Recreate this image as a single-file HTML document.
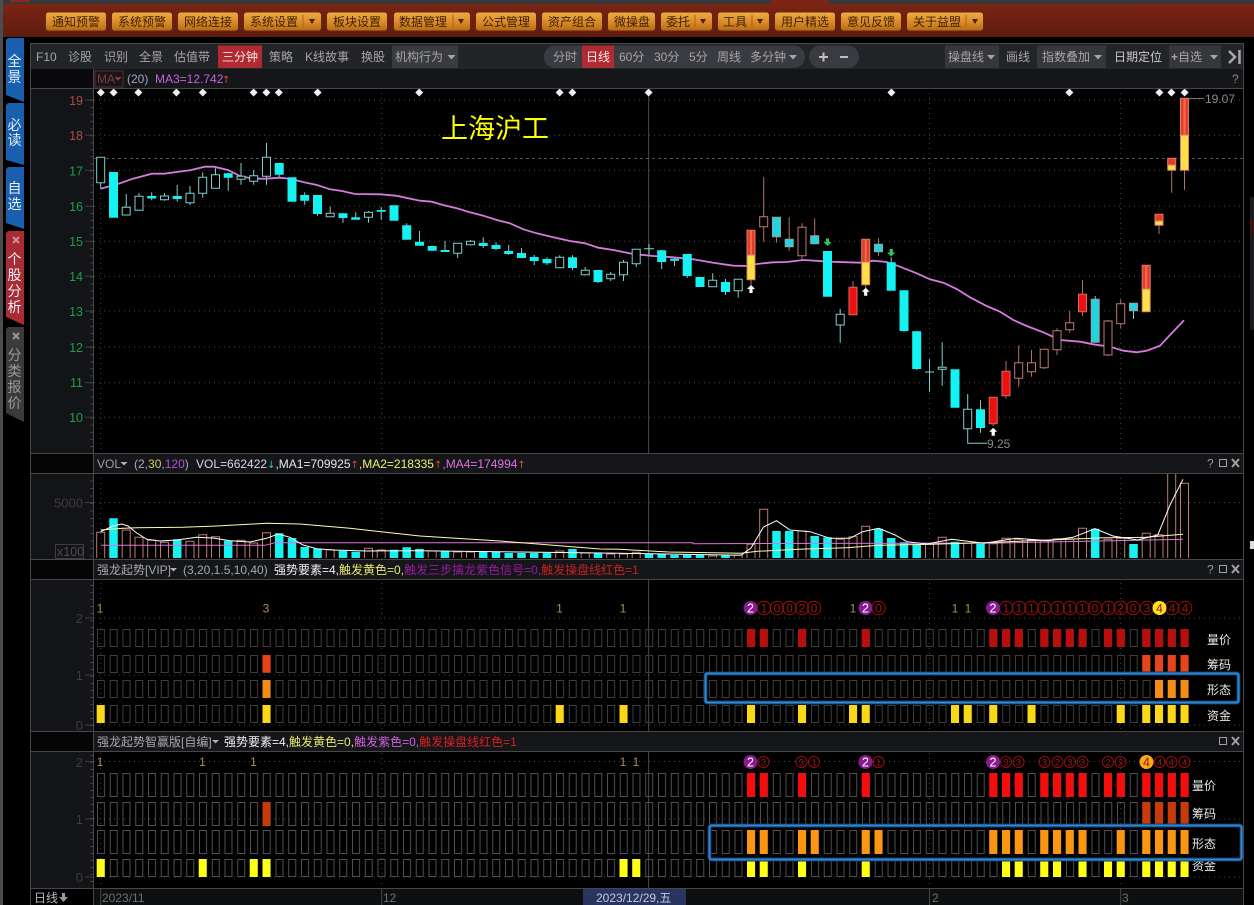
<!DOCTYPE html>
<html><head><meta charset="utf-8"><style>
html,body{margin:0;padding:0;background:#000;width:1254px;height:905px;overflow:hidden}
svg{position:absolute;left:0;top:0;font-family:"Liberation Sans","Noto Sans CJK SC",sans-serif;font-size:12px}
.t{fill:#a6a6a6}
.b{fill:#3f2005;text-anchor:middle}
.m{text-anchor:middle}
.ax{fill:#1f9e48;text-anchor:end;font-size:12.5px}
.dim{fill:#3d3d3d;text-anchor:end;font-size:13px}
.lab{fill:#e8e8e8}
.ar{font-family:"DejaVu Sans",sans-serif;font-size:10px}
</style></head><body>
<svg width="1254" height="905" viewBox="0 0 1254 905" xmlns="http://www.w3.org/2000/svg">
<defs>
<linearGradient id="top" x1="0" y1="0" x2="0" y2="1"><stop offset="0" stop-color="#7c2413"/><stop offset="1" stop-color="#5e1c10"/></linearGradient>
<linearGradient id="btn" x1="0" y1="0" x2="0" y2="1"><stop offset="0" stop-color="#eead48"/><stop offset=".55" stop-color="#d98a26"/><stop offset="1" stop-color="#b56a14"/></linearGradient>
<pattern id="a" patternUnits="userSpaceOnUse" x="97" y="629" width="12.75" height="18"><rect x=".5" y=".5" width="7" height="17" fill="none" stroke="#3e3e3e"/></pattern>
<pattern id="b" patternUnits="userSpaceOnUse" x="97" y="655" width="12.75" height="18"><rect x=".5" y=".5" width="7" height="17" fill="none" stroke="#3e3e3e"/></pattern>
<pattern id="c" patternUnits="userSpaceOnUse" x="97" y="680" width="12.75" height="18"><rect x=".5" y=".5" width="7" height="17" fill="none" stroke="#3e3e3e"/></pattern>
<pattern id="d" patternUnits="userSpaceOnUse" x="97" y="705" width="12.75" height="18"><rect x=".5" y=".5" width="7" height="17" fill="none" stroke="#3e3e3e"/></pattern>
<pattern id="e" patternUnits="userSpaceOnUse" x="97" y="773" width="12.75" height="24"><rect x=".5" y=".5" width="7" height="23" fill="none" stroke="#505050"/></pattern>
<pattern id="f" patternUnits="userSpaceOnUse" x="97" y="802" width="12.75" height="24"><rect x=".5" y=".5" width="7" height="23" fill="none" stroke="#505050"/></pattern>
<pattern id="g" patternUnits="userSpaceOnUse" x="97" y="830" width="12.75" height="24"><rect x=".5" y=".5" width="7" height="23" fill="none" stroke="#505050"/></pattern>
<pattern id="h" patternUnits="userSpaceOnUse" x="97" y="859" width="12.75" height="18"><rect x=".5" y=".5" width="7" height="17" fill="none" stroke="#505050"/></pattern>
</defs>
<rect width="1254" height="905" fill="#000"/>
<!-- top strip -->
<rect x="3" width="1251" height="5" fill="#38383a"/>
<rect x="3" y="4" width="1251" height="33" fill="url(#top)"/>
<rect x="771" width="58" height="5" fill="#7c2413"/>
<rect x="10" width="20" height="2" fill="#8a2a1a"/>
<rect width="3" height="905" fill="#4c4c4c"/>
<!-- toolbar buttons -->
<g fill="url(#btn)" stroke="#66280c">
<rect x="45.5" y="12" width="61" height="19" rx="3"/><rect x="111.5" y="12" width="61" height="19" rx="3"/><rect x="177.5" y="12" width="61" height="19" rx="3"/><rect x="243.5" y="12" width="78" height="19" rx="3"/><rect x="326.5" y="12" width="61" height="19" rx="3"/><rect x="393.5" y="12" width="77" height="19" rx="3"/><rect x="475.5" y="12" width="61" height="19" rx="3"/><rect x="541.5" y="12" width="61" height="19" rx="3"/><rect x="607.5" y="12" width="48" height="19" rx="3"/><rect x="660.5" y="12" width="52" height="19" rx="3"/><rect x="717.5" y="12" width="52" height="19" rx="3"/><rect x="774.5" y="12" width="61" height="19" rx="3"/><rect x="840.5" y="12" width="61" height="19" rx="3"/><rect x="906.5" y="12" width="77" height="19" rx="3"/>
</g>
<g class="b">
<text x="76" y="26" class="b">通知预警</text><text x="142" y="26" class="b">系统预警</text><text x="208" y="26" class="b">网络连接</text><text x="274" y="26" class="b">系统设置</text><text x="357" y="26" class="b">板块设置</text><text x="423" y="26" class="b">数据管理</text><text x="506" y="26" class="b">公式管理</text><text x="572" y="26" class="b">资产组合</text><text x="632" y="26" class="b">微操盘</text><text x="678" y="26" class="b">委托</text><text x="735" y="26" class="b">工具</text><text x="805" y="26" class="b">用户精选</text><text x="871" y="26" class="b">意见反馈</text><text x="937" y="26" class="b">关于益盟</text>
</g>
<path d="M303 15v12M453 15v12M695 15v12M752 15v12M966 15v12" stroke="#a8661e"/>
<path d="M309 19h6l-3 5zM458 19h6l-3 5zM700 19h6l-3 5zM757 19h6l-3 5zM972 19h6l-3 5z" fill="#4a2400"/>
<!-- left tabs -->
<path d="M8 38h16v64L6 95V40z" fill="#1a5fae"/>
<path d="M8 103h16v62L6 160V105z" fill="#1a5fae"/>
<path d="M8 167h16v62L6 223V169z" fill="#1a5fae"/>
<path d="M8 231h16v94L6 317V233z" fill="#a82c34"/>
<path d="M8 327h16v95L6 413V329z" fill="#3a3a3c"/>
<g font-size="14" text-anchor="middle" fill="#e8f0f8">
<text x="14.5" y="66">全</text><text x="14.5" y="82">景</text><text x="14.5" y="130">必</text><text x="14.5" y="145">读</text><text x="14.5" y="193">自</text><text x="14.5" y="209">选</text>
<text x="14.5" y="264">个</text><text x="14.5" y="280">股</text><text x="14.5" y="296">分</text><text x="14.5" y="312">析</text>
<g fill="#9a9a9a"><text x="14.5" y="360">分</text><text x="14.5" y="376">类</text><text x="14.5" y="392">报</text><text x="14.5" y="408">价</text></g>
</g>
<path d="M13 237l6 6M19 237l-6 6" stroke="#c89094" stroke-width="2"/>
<path d="M13 333l6 6M19 333l-6 6" stroke="#999" stroke-width="2"/>
<!-- main frame -->
<rect x="30" y="44" width="1214" height="25" fill="#232428"/>
<rect x="30" y="69" width="1214" height="19" fill="#15161a"/>
<rect x="30" y="88" width="64" height="801" fill="#131417"/>
<rect x="30" y="69" width="64" height="19" fill="#0a0a0c"/>
<!-- grid -->
<g stroke="#454545" stroke-dasharray="1 4" fill="none">
<path d="M94 100H1243M94 135.3H1243M94 170.3H1243M94 206.3H1243M94 241.3H1243M94 276.3H1243M94 311H1243M94 347H1243M94 382.6H1243M94 417.3H1243"/>
<path d="M94 502.5H1243M94 618H1243M94 675H1243M94 725H1243M94 761.5H1243M94 819H1243M94 877H1243"/>
<path d="M100.7 88V888M381.7 88V888M929.5 88V888M1120.7 88V888"/>
</g>
<path d="M648.6 88V888" stroke="#484848"/>
<path d="M94 158.5H1243" stroke="#565656" stroke-dasharray="3 3"/>
<!-- axis ticks -->
<g stroke="#3e3e3e" fill="none">
<path d="M92 100V450" stroke-width="4" stroke-dasharray="1 6.06"/>
<path d="M92 473V558" stroke-width="4" stroke-dasharray="1 6.5"/>
<path d="M92 585V728" stroke-width="4" stroke-dasharray="1 6"/>
<path d="M92 755V885" stroke-width="4" stroke-dasharray="1 6"/>
<path d="M85 100h9M85 135.3h9M85 170.3h9M85 206.3h9M85 241.3h9M85 276.3h9M85 311h9M85 347h9M85 382.6h9M85 417.3h9M85 502.5h9M85 618h9M85 675h9M85 725h9M85 761.5h9M85 819h9M85 877h9"/>
</g>
<text x="83" y="105" class="ax" style="fill:#b04848">19</text>
<text x="83" y="140" class="ax" style="fill:#b04848">18</text>
<text x="83" y="175.5" class="ax">17</text><text x="83" y="211" class="ax">16</text><text x="83" y="246" class="ax">15</text><text x="83" y="281" class="ax">14</text><text x="83" y="316" class="ax">13</text><text x="83" y="352" class="ax">12</text><text x="83" y="387" class="ax">11</text><text x="83" y="422" class="ax">10</text>
<text x="83" y="507.5" class="dim">5000</text>
<rect x="55.5" y="544.5" width="28" height="14" fill="none" stroke="#3d3d3d"/><text x="57" y="556" fill="#4c4c4c" font-size="12.5">x100</text>
<text x="83" y="623" class="dim">2</text><text x="83" y="680" class="dim">1</text><text x="83" y="730" class="dim">0</text>
<text x="83" y="767" class="dim">2</text><text x="83" y="824" class="dim">1</text><text x="83" y="882" class="dim">0</text>
<!-- title -->
<text x="441" y="138" font-size="27" fill="#ffff00" style="font-family:'Noto Sans CJK SC',sans-serif;font-weight:400">上海沪工</text>
<!-- diamonds -->
<path fill="#eee" d="M100.8 88.5l4 4-4 4-4-4zM113.6 88.5l4 4-4 4-4-4zM138.4 88.5l4 4-4 4-4-4zM176.4 88.5l4 4-4 4-4-4zM202.8 88.5l4 4-4 4-4-4zM253.6 88.5l4 4-4 4-4-4zM266.4 88.5l4 4-4 4-4-4zM278.8 88.5l4 4-4 4-4-4zM317.6 88.5l4 4-4 4-4-4zM419.2 88.5l4 4-4 4-4-4zM559.6 88.5l4 4-4 4-4-4zM572.4 88.5l4 4-4 4-4-4zM648.6 88.5l4 4-4 4-4-4zM891.4 88.5l4 4-4 4-4-4zM1069.4 88.5l4 4-4 4-4-4zM1159.4 88.5l4 4-4 4-4-4zM1171.4 88.5l4 4-4 4-4-4zM1184.6 88.5l4 4-4 4-4-4z"/>
<!-- wicks teal -->
<path fill="none" stroke="#7fd0cc" d="M100.7 157V189M126.2 194V215M139 193V210M151.7 192.3V200.3M164.5 193V200.7M177.2 185V201.7M190 186V205M202.7 172.3V197.7M215.5 168.3V188M228.2 172.7V190.7M241 163V184.7M253.7 170V184.7M266.5 143V184.7M279.2 163V177.3M304.7 192.3V204.7M317.5 195V215.7M330.2 206.7V216M343 213V222.7M355.7 212.3V219M368.5 211V222.7M381.2 207V220M406.7 223.3V239M419.5 231V245M445 241V251M457.7 243V258M470.5 240V245.5M483.2 237.3V248M496 242.3V250M508.7 245V255M521.5 248V256M534.2 255V265M547 257.3V265M559.7 255.3V267M572.5 255.3V270M585.2 267V272M598 270V283M610.7 272V281M623.5 260V281M636.2 249V267M649 244V255M644 248.7H654M661.7 250V269M674.5 256.7V266M687.2 254V278M712.7 273.3V283M725.5 279V295M738.2 279V297.7M840.2 309V342.7M891.2 257.3V290M904 290V332M916.7 331V370M929.5 359.3V391.7M925 372H934M942.2 342.3V385.7M967.7 394V443.3H987M980.5 400.3V432.7M1095.2 296V299M1133.5 310V319"/>
<!-- wicks pink -->
<path fill="none" stroke="#b56f6a" d="M751 279V285M763.7 177.3V241.7M776.5 236V242.7M789.2 217.3V250.7M802 223.3V260M814.7 218.3V236M853 281.3V288M865.7 284V289M878.5 238V256M993.2 423V426M1006 361V398.7M1018.7 345.3V386.7M1031.5 350V376.7M1044.2 349V369M1057 328.3V355M1069.7 311V332.7M1082.5 280V316M1108 320V356M1120.7 299.3V328.3M1159 225V234M1171.7 170V192.7M1184.5 170V190"/>
<!-- MA -->
<path fill="none" stroke="#d67ade" stroke-width="1.8" d="M100.7 188.7L120 183.3L133 178.7L152 173.7L164 173.7L190 170.3L205 166.7L214 166.7L228 170L240 176L253 178.7L266 178.7L280 177.7L291 179L304 182.3L317 185L330 189.3L342 191L355 194L380 194.3L396 195.7L420 200.7L431.7 201.7L443 205L456.7 208.3L470 212.3L483.3 215.7L496.7 220L510 223.3L523.3 229.3L536.7 233.3L553.3 237.3L570 241L585 243.3L598.3 247.7L613.3 250L633.3 254L653.3 256L673.3 257.3L693.3 259.3L713.3 262.7L733.3 265.7L750 266L756.7 264L773 262.3L786.7 262L803.3 260L830 261.7L860 262.7L873.3 260.7L886.7 262L900 266.7L916.7 273.3L930 279.3L943.3 282.7L956.7 289L970 297.3L986.7 306L1000 311.7L1013.3 320L1026.7 326L1043.3 332.3L1060 340L1080 341.7L1093.3 344.3L1110 346.7L1123.3 350.7L1136.7 352.3L1146.7 350.7L1160 345.7L1170 335L1184 320.3"/>
<!-- hollow teal bodies -->
<path fill="#000" stroke="#7fd0cc" d="M96.7 157.3h8v25.4h-8zM122.2 207.3h8v7.7h-8zM135 196.3h8v14h-8zM160.5 196h8v3.7h-8zM198.7 177.3h8v16h-8zM211.5 174.7h8v13.6h-8zM186 193.3h8v9.4h-8zM237 176.3h8v3h-8zM249.7 175.7h8v5.6h-8zM262.5 157.3h8v19h-8zM326.2 213.3h8v3.4h-8zM364.5 212.3h8v5h-8zM453.7 243.3h8v10h-8zM466.5 241.3h8v3.4h-8zM555.7 257.3h8v10.4h-8zM581.2 270.3h8v4.4h-8zM606.7 274.3h8v4.4h-8zM619.5 262.3h8v12.4h-8zM632.2 249.3h8v14.4h-8zM708.7 280.3h8v6.4h-8zM734.2 279.3h8v11.4h-8zM836.2 314.3h8v10.7h-8zM938.2 367.3h8v2h-8zM963.7 409.3h8v19.4h-8z"/>
<!-- solid cyan bodies -->
<path fill="#14f2f2" d="M109 172h9v45.7h-9zM147.2 196h9v2.5h-9zM172.7 196h9v3h-9zM223.7 173.3h9v4.4h-9zM274.7 163h9v11.7h-9zM287.5 177.3h9v24.4h-9zM300.2 195h9v5.7h-9zM313 195h9v19h-9zM338.5 213.3h9v4.7h-9zM351.2 217.3h9v2.4h-9zM376.7 210h9v1.7h-9zM389.5 205.3h9v15.4h-9zM402.2 225.3h9v14.4h-9zM415 241.7h9v4h-9zM427.7 246h9v4.7h-9zM440.5 250h9v2h-9zM478.7 243h9v3h-9zM491.5 245h9v4h-9zM504.2 251h9v3h-9zM517 253h9v5h-9zM529.7 257h9v4h-9zM542.5 259h9v4.3h-9zM568 257.3h9v10.7h-9zM593.5 270h9v12h-9zM657.2 250.3h9v11.7h-9zM670 258.7h9v2h-9zM682.7 254h9v22h-9zM695.5 277h9v10h-9zM721 282h9v10h-9zM823 251h9v45.7h-9zM886.7 262.3h9v28.4h-9zM899.5 290.3h9v40.7h-9zM912.2 331.3h9v37.7h-9zM950.5 369.3h9v38.4h-9zM976 409.3h9v18.7h-9z"/>
<!-- cyan with grey border -->
<path fill="#1fd6e0" stroke="#9aa0a0" d="M772.5 217.3h8v19.4h-8zM785.2 239.3h8v7.4h-8zM810.7 235.7h8v8h-8zM874.5 244.3h8v7.4h-8zM1091.2 299.3h8v43h-8zM1129.5 303.3h8v7.4h-8z"/>
<!-- hollow pink bodies -->
<path fill="#000" stroke="#c07a74" d="M759.7 216.7h8v10h-8zM798 227.3h8v28.4h-8zM1014.7 362.7h8v15.6h-8zM1027.5 362.7h8v9h-8zM1040.2 349.3h8v18.4h-8zM1053 330.7h8v19h-8zM1065.7 322.7h8v7h-8zM1104 321h8v34h-8zM1116.7 303.7h8v20h-8z"/>
<!-- red bodies -->
<path fill="#ee1010" stroke="#d86a60" d="M849 287.3h8v27.4h-8zM989.2 397.3h8v26.4h-8zM1002 371.3h8v24.4h-8zM1078.5 294.3h8v17.4h-8z"/>
<!-- bicolor -->
<g stroke="#d8805a">
<path fill="#e63a2c" d="M747 230.3h8V255h-8zM861.7 239.3h8V262h-8zM1142.2 265.3h8V289h-8zM1155 214.3h8V221h-8zM1167.7 158.3h8V165h-8zM1180.5 98.3h8V135h-8z"/>
<path fill="#fde04a" d="M747 255h8v24.7h-8zM861.7 262h8v22.7h-8zM1142.2 289h8v22.7h-8zM1155 221h8v4.3h-8zM1167.7 165h8v5.3h-8zM1180.5 135h8v35.3h-8z"/>
</g>
<path d="M751 230.3V255M865.7 239.3V262M1146.2 265.3V289M1184.5 98.3V135" stroke="#f26a50" stroke-width="2"/>
<!-- arrows -->
<path fill="#fff" d="M751 285l4 4h-2.4v4h-3.2v-4H747zM865.7 287.7l4 4h-2.4v4h-3.2v-4h-2.4zM993.2 427.7l4 4h-2.4v4h-3.2v-4h-2.4z"/>
<path fill="#2ec850" d="M827.5 246l-4-4h2.4v-3.5h3.2v3.5h2.4zM891.2 256.5l-4-4h2.4v-3.5h3.2v3.5h2.4z"/>
<!-- hi/lo labels -->
<path d="M1188 98.5H1204" stroke="#777"/>
<text x="1205" y="103" fill="#8a8a8a">19.07</text>
<text x="987" y="448" fill="#8a8a8a">9.25</text>
<!-- VOL bars -->
<path stroke="#14f2f2" stroke-width="8.5" fill="none" d="M113.5 518.3V558M177.2 539.3V558M228.2 540.7V558M279.2 533.3V558M292 538V558M304.7 547V558M317.5 548.7V558M343 550.7V558M355.7 551.7V558M394 549.7V558M406.7 547.3V558M419.5 549V558M445 551V558M483.2 552V558M496 552V558M508.7 553V558M521.5 553V558M534.2 553V558M547 553V558M572.5 549V558M598 553V558M649 554V558M661.7 554V558M674.5 555V558M687.2 555V558M700 555V558M725.5 555.3V558M776.5 531V558M789.2 531V558M814.7 536V558M827.5 537.3V558M878.5 528.7V558M891.2 538V558M904 542.3V558M916.7 544.3V558M955 541.7V558M980.5 543.7V558M1095.2 528.7V558M1133.5 544V558"/>
<path stroke="#c07a74" fill="none" d="M96.7 558V532.3h8V558M122.2 558V530h8V558M135 558V537.3h8V558M147.7 558V540.3h8V558M160.5 558V542.3h8V558M186 558V541.3h8V558M198.7 558V534.7h8V558M211.5 558V536.7h8V558M237 558V540.3h8V558M249.7 558V543h8V558M262.5 558V532.7h8V558M326.2 558V549.7h8V558M364.5 558V548.3h8V558M377.2 558V550h8V558M428.2 558V551h8V558M453.7 558V552h8V558M466.5 558V552h8V558M555.7 558V551h8V558M581.2 558V553h8V558M606.7 558V554h8V558M619.5 558V554h8V558M632.2 558V552.3h8V558M708.7 558V556h8V558M734.2 558V555h8V558M747 558V544.3h8V558M759.7 558V509.3h8V558M798 558V531h8V558M836.2 558V539.3h8V558M849 558V536.7h8V558M861.7 558V526.3h8V558M925.5 558V544.3h8V558M938.2 558V537.3h8V558M963.7 558V543h8V558M989.2 558V543.7h8V558M1002 558V538.3h8V558M1014.7 558V539.3h8V558M1027.5 558V540h8V558M1040.2 558V540.7h8V558M1053 558V538.7h8V558M1065.7 558V539.3h8V558M1078.5 558V528.3h8V558M1104 558V539.3h8V558M1116.7 558V538.3h8V558M1142.2 558V533.3h8V558M1155 558V534.7h8V558M1167.7 558V473.3h8V558M1180.5 558V483.3h8V558"/>
<path fill="none" stroke="#d878d8" d="M100.7 545.3H265L275 542.7H693V543.7L1000 543L1183 539.3"/>
<path fill="none" stroke="#ffffb0" d="M100.7 530L123 528.3L136.7 527.7L183 527.3L216.7 526L266.7 523.3L300 524L350 528.3L420 536L500 541L600 549L620 549.3L668.5 552L741 553.3L757.5 551.3L798 549.3L846.4 547.7L878.8 545.3L931.4 544.3L984 542.7L1048.6 540L1105 537.7L1145.7 537.3L1183 534.3"/>
<path fill="none" stroke="#fff" d="M100.7 531.7L113 526L121.7 524L128 526L136.7 533L146.7 539.3L160 541L176.7 540L196.7 537.3L213 538L230 540.7L250 542L266.7 538.3L278 534L290 537.3L303 545L316.7 548.7L333 550L366.7 551L420 550.7L520 552L620 553.3L741 555.3L751 548L763.5 527L776.5 520.7L790 530L810 531.7L830 538.3L850 538.3L862.6 531.7L878.8 528.3L895 535L907 541.7L927 544L951.6 539.3L984 543.3L1016 538.3L1048.6 540.7L1073 537.3L1095 528.7L1113 536L1137.6 540L1157.8 535L1170 505L1183 479.3"/>
<!-- panel 3 boxes -->
<rect x="97" y="629" width="1096.5" height="18" fill="url(#a)"/>
<rect x="97" y="655" width="1096.5" height="18" fill="url(#b)"/>
<rect x="97" y="680" width="1096.5" height="18" fill="url(#c)"/>
<rect x="97" y="705" width="1096.5" height="18" fill="url(#d)"/>
<path stroke="#b80e0e" stroke-width="8" d="M751 629v18M763.7 629v18M802 629v18M865.7 629v18M993.2 629v18M1006 629v18M1018.7 629v18M1044.2 629v18M1057 629v18M1069.7 629v18M1082.5 629v18M1108 629v18M1120.7 629v18M1146.2 629v18M1159 629v18M1171.7 629v18M1184.5 629v18"/>
<path stroke="#e8431a" stroke-width="8" d="M266.5 655v17.5M1146.2 655v17.5M1159 655v17.5M1171.7 655v17.5M1184.5 655v17.5"/>
<path stroke="#f58c16" stroke-width="8" d="M266.5 680v18M1159 680v18M1171.7 680v18M1184.5 680v18"/>
<path stroke="#fbd816" stroke-width="8" d="M100.7 705v18M266.5 705v18M559.7 705v18M623.5 705v18M751 705v18M802 705v18M853 705v18M865.7 705v18M955 705v18M967.7 705v18M993.2 705v18M1031.5 705v18M1120.7 705v18M1146.2 705v18M1159 705v18M1171.7 705v18M1184.5 705v18"/>
<!-- panel 3 numbers -->
<text x="100 266 559.5 623 853 955 968" y="612.5" fill="#b08c50" font-size="12" style="text-anchor:middle">1311111</text>
<g fill="none" stroke="#981010">
<circle cx="764" cy="608" r="6.8"/><circle cx="777" cy="608" r="6.8"/><circle cx="789.5" cy="608" r="6.8"/><circle cx="802" cy="608" r="6.8"/><circle cx="814" cy="608" r="6.8"/><circle cx="878.5" cy="608" r="6.8"/><circle cx="1006" cy="608" r="6.8"/><circle cx="1019" cy="608" r="6.8"/><circle cx="1031.5" cy="608" r="6.8"/><circle cx="1044.5" cy="608" r="6.8"/><circle cx="1057.5" cy="608" r="6.8"/><circle cx="1070" cy="608" r="6.8"/><circle cx="1082.5" cy="608" r="6.8"/><circle cx="1095" cy="608" r="6.8"/><circle cx="1108.5" cy="608" r="6.8"/><circle cx="1120.5" cy="608" r="6.8"/><circle cx="1133" cy="608" r="6.8"/><circle cx="1147" cy="608" r="6.8"/><circle cx="1172" cy="608" r="6.8"/><circle cx="1185" cy="608" r="6.8"/>
</g>
<circle cx="750.5" cy="608" r="7" fill="#8a1a90"/><circle cx="865.5" cy="608" r="7" fill="#8a1a90"/><circle cx="993" cy="608" r="7" fill="#8a1a90"/><circle cx="1159.5" cy="608" r="7" fill="#ffe020"/>
<text x="750.5 865.5 993" y="612.5" fill="#fff" font-size="12.5" text-anchor="middle">222</text>
<text x="764 777 789.5 802 814 878.5 1006 1019 1031.5 1044.5 1057.5 1070 1082.5 1095 1108.5 1120.5 1133 1147 1159.5 1172 1185" y="612.5" fill="#a01414" font-size="12" text-anchor="middle">100200111111101203444</text>
<!-- panel 3 labels -->
<text x="1207" y="644" class="lab">量价</text><text x="1207" y="669" class="lab">筹码</text><text x="1207" y="694" class="lab">形态</text><text x="1207" y="720" class="lab">资金</text>
<rect x="705.5" y="673.5" width="533" height="29" rx="2" fill="none" stroke="#123a60" stroke-width="4"/>
<rect x="705.5" y="673.5" width="533" height="29" rx="2" fill="none" stroke="#2f88da" stroke-width="2"/>
<!-- panel 4 boxes -->
<rect x="97" y="773" width="1096.5" height="24" fill="url(#e)"/>
<rect x="97" y="802" width="1096.5" height="24" fill="url(#f)"/>
<rect x="97" y="830" width="1096.5" height="24" fill="url(#g)"/>
<rect x="97" y="859" width="1096.5" height="18" fill="url(#h)"/>
<path stroke="#f50c0c" stroke-width="8" d="M751 773v24M763.7 773v24M802 773v24M865.7 773v24M993.2 773v24M1006 773v24M1018.7 773v24M1044.2 773v24M1057 773v24M1069.7 773v24M1082.5 773v24M1108 773v24M1120.7 773v24M1146.2 773v24M1159 773v24M1171.7 773v24M1184.5 773v24"/>
<path stroke="#c83a08" stroke-width="8" d="M266.5 802v24M1146.2 802v24M1159 802v24M1171.7 802v24M1184.5 802v24"/>
<path stroke="#fa9612" stroke-width="8" d="M751 830v24M763.7 830v24M802 830v24M814.7 830v24M865.7 830v24M878.5 830v24M993.2 830v24M1006 830v24M1018.7 830v24M1044.2 830v24M1057 830v24M1069.7 830v24M1082.5 830v24M1120.7 830v24M1146.2 830v24M1159 830v24M1171.7 830v24M1184.5 830v24"/>
<path stroke="#ffff14" stroke-width="8" d="M100.7 859v18M202.7 859v18M253.7 859v18M266.5 859v18M623.5 859v18M636.2 859v18M751 859v18M763.7 859v18M802 859v18M865.7 859v18M1006 859v18M1018.7 859v18M1044.2 859v18M1057 859v18M1082.5 859v18M1108 859v18M1120.7 859v18M1146.2 859v18M1159 859v18M1171.7 859v18M1184.5 859v18"/>
<!-- panel 4 numbers -->
<text x="100 202.5 253.5 623 636" y="766" fill="#b08c50" font-size="12" text-anchor="middle">11111</text>
<g fill="none" stroke="#981010">
<circle cx="763.5" cy="762" r="5.5"/><circle cx="801.5" cy="762" r="5.5"/><circle cx="814" cy="762" r="5.5"/><circle cx="878.5" cy="762" r="5.5"/><circle cx="1006" cy="762" r="5.5"/><circle cx="1018.5" cy="762" r="5.5"/><circle cx="1044.5" cy="762" r="5.5"/><circle cx="1057.5" cy="762" r="5.5"/><circle cx="1070" cy="762" r="5.5"/><circle cx="1082.5" cy="762" r="5.5"/><circle cx="1108" cy="762" r="5.5"/><circle cx="1120.5" cy="762" r="5.5"/><circle cx="1159.5" cy="762" r="5.5"/><circle cx="1171.5" cy="762" r="5.5"/><circle cx="1184.5" cy="762" r="5.5"/>
</g>
<circle cx="750.5" cy="762" r="7" fill="#8a1a90"/><circle cx="865.5" cy="762" r="7" fill="#8a1a90"/><circle cx="993" cy="762" r="7" fill="#8a1a90"/><circle cx="1146.5" cy="762" r="7" fill="#f8a818"/>
<text x="750.5 865.5 993" y="766.5" fill="#fff" font-size="12.5" text-anchor="middle">222</text>
<text x="1146.5" y="766.5" fill="#a01414" font-size="12.5" text-anchor="middle">4</text>
<text x="763.5 801.5 814 878.5 1006 1018.5 1044.5 1057.5 1070 1082.5 1108 1120.5 1159.5 1171.5 1184.5" y="765.5" fill="#a01414" font-size="9.5" text-anchor="middle">331133323323444</text>
<!-- panel 4 labels -->
<text x="1192" y="790" class="lab">量价</text><text x="1192" y="818" class="lab">筹码</text><text x="1192" y="848" class="lab">形态</text><text x="1192" y="870" class="lab">资金</text>
<rect x="709.5" y="825.5" width="532" height="34" rx="2" fill="none" stroke="#123a60" stroke-width="4"/>
<rect x="709.5" y="825.5" width="532" height="34" rx="2" fill="none" stroke="#2f88da" stroke-width="2"/>
<!-- panel headers -->
<rect x="94" y="454" width="1150" height="19" fill="#15161a"/>
<rect x="94" y="560" width="1150" height="19" fill="#15161a"/>
<rect x="94" y="732" width="1150" height="19" fill="#15161a"/>
<rect x="30" y="454" width="64" height="19" fill="#050506"/>
<rect x="30" y="560" width="64" height="19" fill="#050506"/>
<rect x="30" y="732" width="64" height="19" fill="#050506"/>
<rect x="94" y="889" width="1150" height="16" fill="#0e0f11"/>
<g stroke="#474747" fill="none">
<path d="M30 43.5H1244M30 88.5H1244M30 453.5H1244M30 473.5H1244M30 559.5H1244M30 579.5H1244M30 731.5H1244M30 751.5H1244M30 888.5H1244M30.5 44V905M93.5 69V905M1243.5 44V905"/>
</g>
<path d="M1250 197h4v133h-4z" fill="#1c1c1e"/><path d="M1250 220h4v14h-4z" fill="#3a1214"/><path d="M1250 541h4v8h-4z" fill="#ddd"/>
<!-- toolbar -->
<rect x="544" y="45.5" width="261" height="22.5" rx="11" fill="#3a3b40"/>
<rect x="809" y="45.5" width="50" height="22.5" rx="11" fill="#3a3b40"/>
<rect x="218" y="45.5" width="44" height="22.5" fill="#b02a32"/>
<rect x="582" y="45.5" width="32" height="22.5" fill="#b02a32"/>
<rect x="392" y="45.5" width="66" height="22.5" fill="#3a3b3f"/>
<rect x="945" y="45.5" width="54" height="22.5" fill="#36373b"/>
<rect x="1037" y="45.5" width="69" height="22.5" fill="#36373b"/>
<rect x="1169" y="45.5" width="52" height="22.5" fill="#36373b"/>
<g class="t">
<text x="36" y="61">F10</text><text x="68" y="61">诊股</text><text x="104" y="61">识别</text><text x="139" y="61">全景</text><text x="174" y="61">估值带</text>
<text x="222" y="61" style="fill:#f4e8e8">三分钟</text><text x="269" y="61">策略</text><text x="305" y="61">K线故事</text><text x="361" y="61">换股</text><text x="395" y="61">机构行为</text>
<text x="553" y="61">分时</text><text x="586" y="61" style="fill:#f4e8e8">日线</text><text x="619" y="61">60分</text><text x="654" y="61">30分</text><text x="689" y="61">5分</text><text x="717" y="61">周线</text><text x="750" y="61">多分钟</text>
<text x="948" y="61">操盘线</text><text x="1006" y="61">画线</text><text x="1042" y="61">指数叠加</text><text x="1114" y="61" style="fill:#c8c8c8">日期定位</text><text x="1171" y="61"><tspan font-weight="bold">+</tspan>自选</text>
</g>
<path d="M447.5 55h8l-4 4.5zM789 55h8l-4 4.5zM987 55h8l-4 4.5zM1094 55h8l-4 4.5zM1210 55h8l-4 4.5z" fill="#a6a6a6"/>
<path d="M819 57h9M823.5 52.5v9M840 57h8" stroke="#c0c0c0" stroke-width="2"/>
<path d="M1229 51l6 6-6 6M1239.5 50v14" fill="none" stroke="#a8a8a8" stroke-width="2.5"/>
<!-- MA row -->
<rect x="95" y="71" width="28" height="16" fill="none" stroke="#5c2a2a"/>
<text x="97" y="83" fill="#8a3838">MA</text><path d="M114.5 77h7l-3.5 4z" fill="#8a3838"/>
<text x="127" y="83" fill="#a0a0c8">(20)</text>
<text x="155" y="83" fill="#c860e0">MA3=12.742</text><text x="222" y="83" class="ar" fill="#e05040">↑</text>
<text x="1232" y="83" fill="#888">?</text>
<!-- VOL header -->
<text x="97" y="468" fill="#a0a0a0">VOL</text><path d="M120.5 462h7l-3.5 3.5z" fill="#b0b0b0"/>
<text x="134" y="468" xml:space="preserve"><tspan fill="#a8a8c0">(2,</tspan><tspan fill="#d8c860">30</tspan><tspan fill="#a8a8c0">,</tspan><tspan fill="#a858d0">120</tspan><tspan fill="#a8a8c0">)</tspan></text>
<text x="196" y="468"><tspan fill="#d8d8e8">VOL=662422</tspan><tspan fill="#30c8d0" class="ar">↓</tspan><tspan fill="#e8e8e8">,MA1=709925</tspan><tspan fill="#d85030" class="ar">↑</tspan><tspan fill="#f0f070">,MA2=218335</tspan><tspan fill="#d85030" class="ar">↑</tspan><tspan fill="#e070e0">,MA4=174994</tspan><tspan fill="#d85030" class="ar">↑</tspan></text>
<!-- panel 3 header -->
<text x="97" y="574" fill="#a8a8a8">强龙起势[VIP]</text><path d="M170 568h7l-3.5 3.5z" fill="#b0b0b0"/>
<text x="183" y="574" fill="#a8a8a8">(3,20,1.5,10,40)</text>
<text x="274" y="574"><tspan fill="#f0f0f0">强势要素=4,</tspan><tspan fill="#e8e870">触发黄色=0,</tspan><tspan fill="#9a1aa0">触发三步擒龙紫色信号=0,</tspan><tspan fill="#c82020">触发操盘线红色=1</tspan></text>
<!-- panel 4 header -->
<text x="97" y="746" fill="#a8a8a8">强龙起势智赢版[自编]</text><path d="M212 740h7l-3.5 3.5z" fill="#b0b0b0"/>
<text x="224" y="746"><tspan fill="#f0f0f0">强势要素=4,</tspan><tspan fill="#e8e870">触发黄色=0,</tspan><tspan fill="#d060e0">触发紫色=0,</tspan><tspan fill="#d82020">触发操盘线红色=1</tspan></text>
<!-- header icons -->
<g fill="#9a9a9a"><text x="1207" y="467.5">?</text><text x="1207" y="573.5">?</text></g>
<g fill="none" stroke="#a0a0a0"><rect x="1219.5" y="459.5" width="7" height="7"/><rect x="1219.5" y="565.5" width="7" height="7"/><rect x="1219.5" y="737.5" width="7" height="7"/>
<path stroke-width="2" d="M1232 459l7 8M1239 459l-7 8M1232 565l7 8M1239 565l-7 8M1232 737l7 8M1239 737l-7 8"/></g>
<!-- time axis -->
<rect x="583" y="889" width="103" height="16" fill="#283560"/>
<path d="M100.7 889v16M381.7 889v16M929.5 889v16M1120.7 889v16" stroke="#474747"/>
<text x="34" y="902" fill="#b8b8b8">日线</text><path d="M62 893h3v4h3l-4.5 5-4.5-5h3z" fill="#999"/>
<text x="102" y="902" fill="#707070">2023/11</text><text x="383" y="902" fill="#707070">12</text>
<text x="596" y="902" fill="#c8c8d8">2023/12/29,五</text>
<text x="932" y="902" fill="#707070">2</text><text x="1122" y="902" fill="#707070">3</text>
</svg>
</body></html>
